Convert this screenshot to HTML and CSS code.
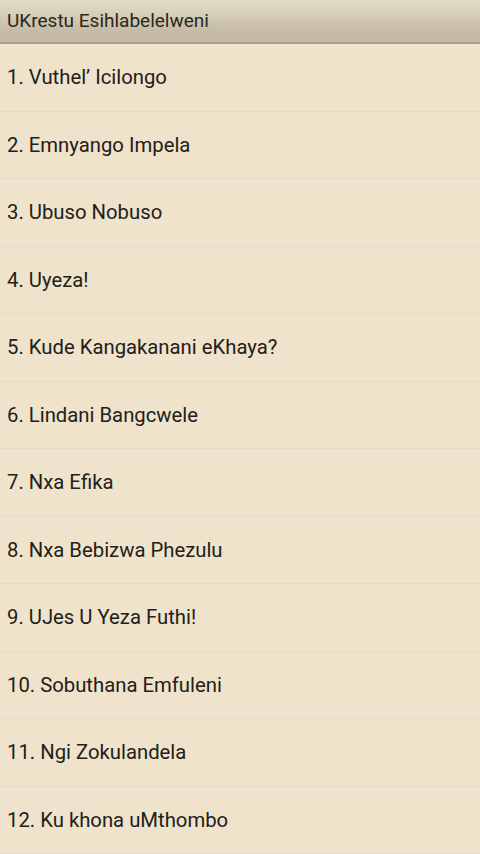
FILE: index.html
```html
<!DOCTYPE html>
<html>
<head>
<meta charset="utf-8">
<link rel="stylesheet" href="styles.css">
</head>
<body>
<div class="app">
  <header class="titlebar">UKrestu Esihlabelelweni</header>
  <ul class="list">
    <li class="item">1. Vuthel’ Icilongo</li>
    <li class="item">2. Emnyango Impela</li>
    <li class="item">3. Ubuso Nobuso</li>
    <li class="item">4. Uyeza!</li>
    <li class="item">5. Kude Kangakanani eKhaya?</li>
    <li class="item">6. Lindani Bangcwele</li>
    <li class="item">7. Nxa Efika</li>
    <li class="item">8. Nxa Bebizwa Phezulu</li>
    <li class="item">9. UJes U Yeza Futhi!</li>
    <li class="item">10. Sobuthana Emfuleni</li>
    <li class="item">11. Ngi Zokulandela</li>
    <li class="item">12. Ku khona uMthombo</li>
  </ul>
</div>
</body>
</html>
```
FILE: styles.css
```css
html, body {
  margin: 0;
  padding: 0;
  height: 100%;
  overflow: hidden;
}
body {
  background: #efe3cb;
  font-family: Roboto, "Noto Sans", sans-serif;
  color: #222018;
}
.app {
  display: flex;
  flex-direction: column;
  height: 854px;
}
.titlebar {
  height: 44px;
  box-sizing: border-box;
  padding: 0 0 2px 7px;
  display: flex;
  align-items: center;
  font-size: 19px;
  color: #2a2720;
  background: linear-gradient(to bottom, #e4ddc6 0%, #d6ceb8 35%, #c6bca7 70%, #c3b9a4 100%);
  border-bottom: 2px solid #a9a08f;
  flex: none;
}
.list {
  list-style: none;
  margin: 0;
  padding: 0;
  flex: 1;
  display: flex;
  flex-direction: column;
}
.item {
  height: 67.5px;
  box-sizing: border-box;
  display: flex;
  align-items: center;
  padding: 0 0 0 7px;
  font-size: 20.3px;
  border-bottom: 1px solid #e7d9c8;
  flex: none;
}
```
